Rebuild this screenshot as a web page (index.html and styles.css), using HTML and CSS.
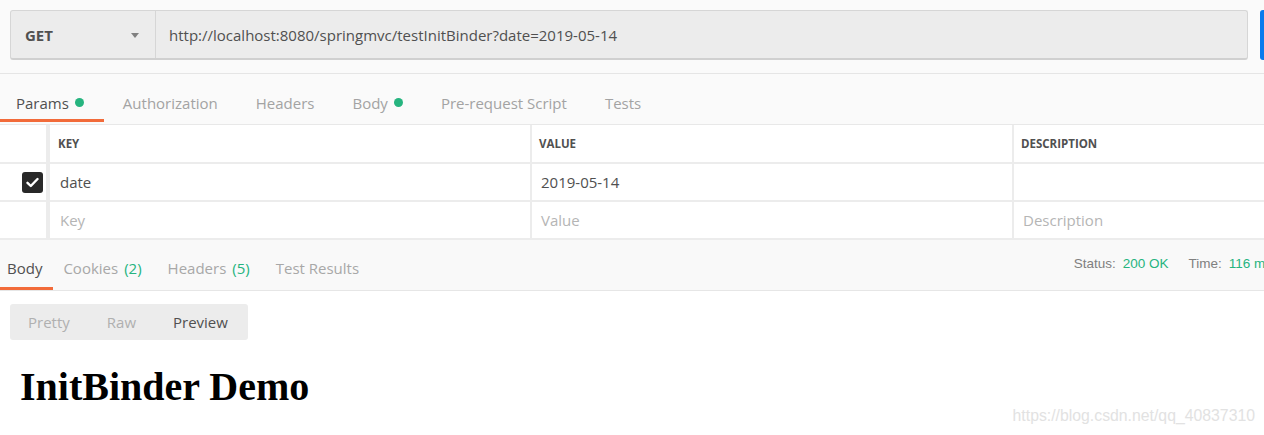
FILE: index.html
```html
<!DOCTYPE html>
<html>
<head>
<meta charset="utf-8">
<link rel="stylesheet" href="styles.css">
</head>
<body>
<div class="app">
  <div class="topbar">
    <div class="request">
      <div class="method">
        <span class="method-name">GET</span>
        <span class="caret"></span>
      </div>
      <div class="url">http://localhost:8080/springmvc/testInitBinder?date=2019-05-14</div>
    </div>
    <div class="send"></div>
  </div>

  <div class="req-tabs">
    <div class="tab active first">Params <span class="dot"></span></div>
    <div class="tab">Authorization</div>
    <div class="tab">Headers</div>
    <div class="tab">Body <span class="dot"></span></div>
    <div class="tab">Pre-request Script</div>
    <div class="tab">Tests</div>
  </div>

  <div class="params">
    <div class="prow head">
      <div class="cell check"></div>
      <div class="cell key">KEY</div>
      <div class="cell val">VALUE</div>
      <div class="cell desc">DESCRIPTION</div>
    </div>
    <div class="prow">
      <div class="cell check">
        <span class="checkbox">
          <svg width="13" height="11" viewBox="0 0 13 11"><path d="M1.5 5.8 L4.8 9 L11.5 2" fill="none" stroke="#fff" stroke-width="2.4" stroke-linecap="round" stroke-linejoin="round"/></svg>
        </span>
      </div>
      <div class="cell key">date</div>
      <div class="cell val">2019-05-14</div>
      <div class="cell desc"></div>
    </div>
    <div class="prow">
      <div class="cell check"></div>
      <div class="cell key ph">Key</div>
      <div class="cell val ph">Value</div>
      <div class="cell desc ph">Description</div>
    </div>
  </div>

  <div class="res-bar">
    <div class="res-tabs">
      <div class="rtab active first">Body</div>
      <div class="rtab second">Cookies <span class="count">(2)</span></div>
      <div class="rtab">Headers <span class="count">(5)</span></div>
      <div class="rtab">Test Results</div>
    </div>
    <div class="meta">
      <span class="mlabel">Status:</span><span class="mval">200 OK</span>
      <span class="mlabel time">Time:</span><span class="mval">116 ms</span>
    </div>
  </div>

  <div class="response">
    <div class="seg">
      <span class="seg-item">Pretty</span>
      <span class="seg-item">Raw</span>
      <span class="seg-item on">Preview</span>
    </div>
    <h1 class="preview-title">InitBinder Demo</h1>
  </div>

  <div class="watermark">https://blog.csdn.net/qq_40837310</div>
</div>
</body>
</html>
```

FILE: styles.css
```css
html, body {
  margin: 0;
  padding: 0;
  background: #ffffff;
  overflow: hidden;
}
.app {
  position: relative;
  width: 1264px;
  height: 435px;
  overflow: hidden;
  font-family: "Open Sans", "Noto Sans", sans-serif;
  color: #505050;
}

/* top bar */
.topbar {
  display: flex;
  gap: 12px;
  height: 74px;
  box-sizing: border-box;
  padding: 10px 0 0 10px;
  background: #fafafa;
  border-bottom: 1px solid #e5e5e5;
}
.request {
  display: flex;
  flex: none;
  width: 1238px;
  height: 50px;
  box-sizing: border-box;
  background: #ececec;
  border: 1px solid #d6d6d6;
  border-bottom: 2px solid #d0d0d0;
  border-radius: 3px;
}
.method {
  width: 145px;
  flex: none;
  display: flex;
  align-items: center;
  justify-content: space-between;
  box-sizing: border-box;
  padding: 0 16px 0 14px;
  border-right: 1px solid #d6d6d6;
}
.method-name {
  font-size: 15px;
  font-weight: 700;
  color: #505050;
}
.caret {
  width: 0;
  height: 0;
  border-left: 4.5px solid transparent;
  border-right: 4.5px solid transparent;
  border-top: 5px solid #808080;
  margin-top: 1px;
}
.url {
  display: flex;
  align-items: center;
  padding-left: 13px;
  font-size: 15px;
  color: #505050;
  white-space: nowrap;
}
.send {
  width: 100px;
  height: 50px;
  flex: none;
  background: #097bed;
  border-radius: 3px;
}

/* request tabs */
.req-tabs {
  display: flex;
  height: 51px;
  box-sizing: border-box;
  background: #fafafa;
  border-bottom: 1px solid #e8e8e8;
}
.tab {
  display: flex;
  align-items: center;
  gap: 6px;
  padding: 13px 19px 0 19px;
  font-size: 15px;
  color: #a3a3a3;
  border-bottom: 3px solid transparent;
  margin-bottom: 2px;
}
.tab.first {
  padding-left: 16px;
  padding-right: 20px;
}
.tab.active {
  color: #505050;
  border-bottom-color: #f26b3a;
}
.dot {
  display: inline-block;
  width: 9px;
  height: 9px;
  border-radius: 50%;
  background: #26b47f;
  margin-top: -2px;
}

/* params table */
.params {
  background: #ffffff;
}
.prow {
  display: grid;
  grid-template-columns: 46px 484px 482px 1fr;
  height: 38px;
  box-sizing: border-box;
  border-bottom: 2px solid #ececec;
}
.prow.head {
  height: 39px;
}
.cell {
  display: flex;
  align-items: center;
  box-sizing: border-box;
  font-size: 15px;
  color: #505050;
}
.cell.key {
  border-left: 4px solid #ececec;
  padding-left: 10px;
}
.cell.val {
  border-left: 2px solid #ececec;
  padding-left: 9px;
}
.cell.desc {
  border-left: 2px solid #ececec;
  padding-left: 9px;
}
.head .cell {
  font-size: 11.5px;
  font-weight: 700;
  color: #505050;
}
.head .cell.key { padding-left: 8px; }
.head .cell.val { padding-left: 7px; }
.head .cell.desc { padding-left: 7px; }
.cell.ph {
  color: #b5b5b5;
}
.cell.check {
  justify-content: flex-end;
  padding-right: 3px;
}
.checkbox {
  width: 21px;
  height: 21px;
  border-radius: 3px;
  background: #282828;
  display: flex;
  align-items: center;
  justify-content: center;
  margin-top: 1px;
}

/* response bar */
.res-bar {
  display: flex;
  justify-content: space-between;
  height: 51px;
  box-sizing: border-box;
  background: #f9f9f9;
  border-bottom: 1px solid #e6e6e6;
}
.res-tabs {
  display: flex;
}
.rtab {
  display: flex;
  align-items: center;
  gap: 6px;
  padding: 9px 13px 0 13px;
  font-size: 15px;
  color: #a8a8a8;
  border-bottom: 3px solid transparent;
}
.rtab.first {
  padding-left: 7px;
  padding-right: 11px;
}
.rtab.second {
  padding-left: 10px;
}
.rtab.active {
  color: #505050;
  border-bottom-color: #f26b3a;
}
.count {
  color: #26b47f;
}
.meta {
  display: flex;
  align-items: center;
  padding-bottom: 3px;
  font-family: "Liberation Sans", Arial, sans-serif;
  font-size: 13.5px;
  white-space: nowrap;
  margin-right: -8px;
}
.mlabel {
  color: #808080;
  margin-right: 7px;
}
.mlabel.time {
  margin-left: 20px;
}
.mval {
  color: #26b47f;
}

/* response body */
.response {
  padding: 13px 0 0 10px;
}
.seg {
  display: inline-flex;
  height: 36px;
  box-sizing: border-box;
  background: #ececec;
  border-radius: 3px;
  align-items: center;
  padding: 0 1px 0 0;
}
.seg-item {
  padding: 0 19px 0 18px;
  font-size: 15px;
  color: #b0b0b0;
}
.seg-item.on {
  color: #505050;
}
.preview-title {
  margin: 23px 0 0 10px;
  font-family: "Liberation Serif", "Times New Roman", serif;
  font-weight: 700;
  font-size: 40px;
  line-height: 48px;
  color: #000000;
}

.watermark {
  position: absolute;
  right: 9px;
  top: 407px;
  font-family: "Liberation Sans", Arial, sans-serif;
  font-size: 15.8px;
  color: #e2e2e2;
  white-space: nowrap;
}
```
